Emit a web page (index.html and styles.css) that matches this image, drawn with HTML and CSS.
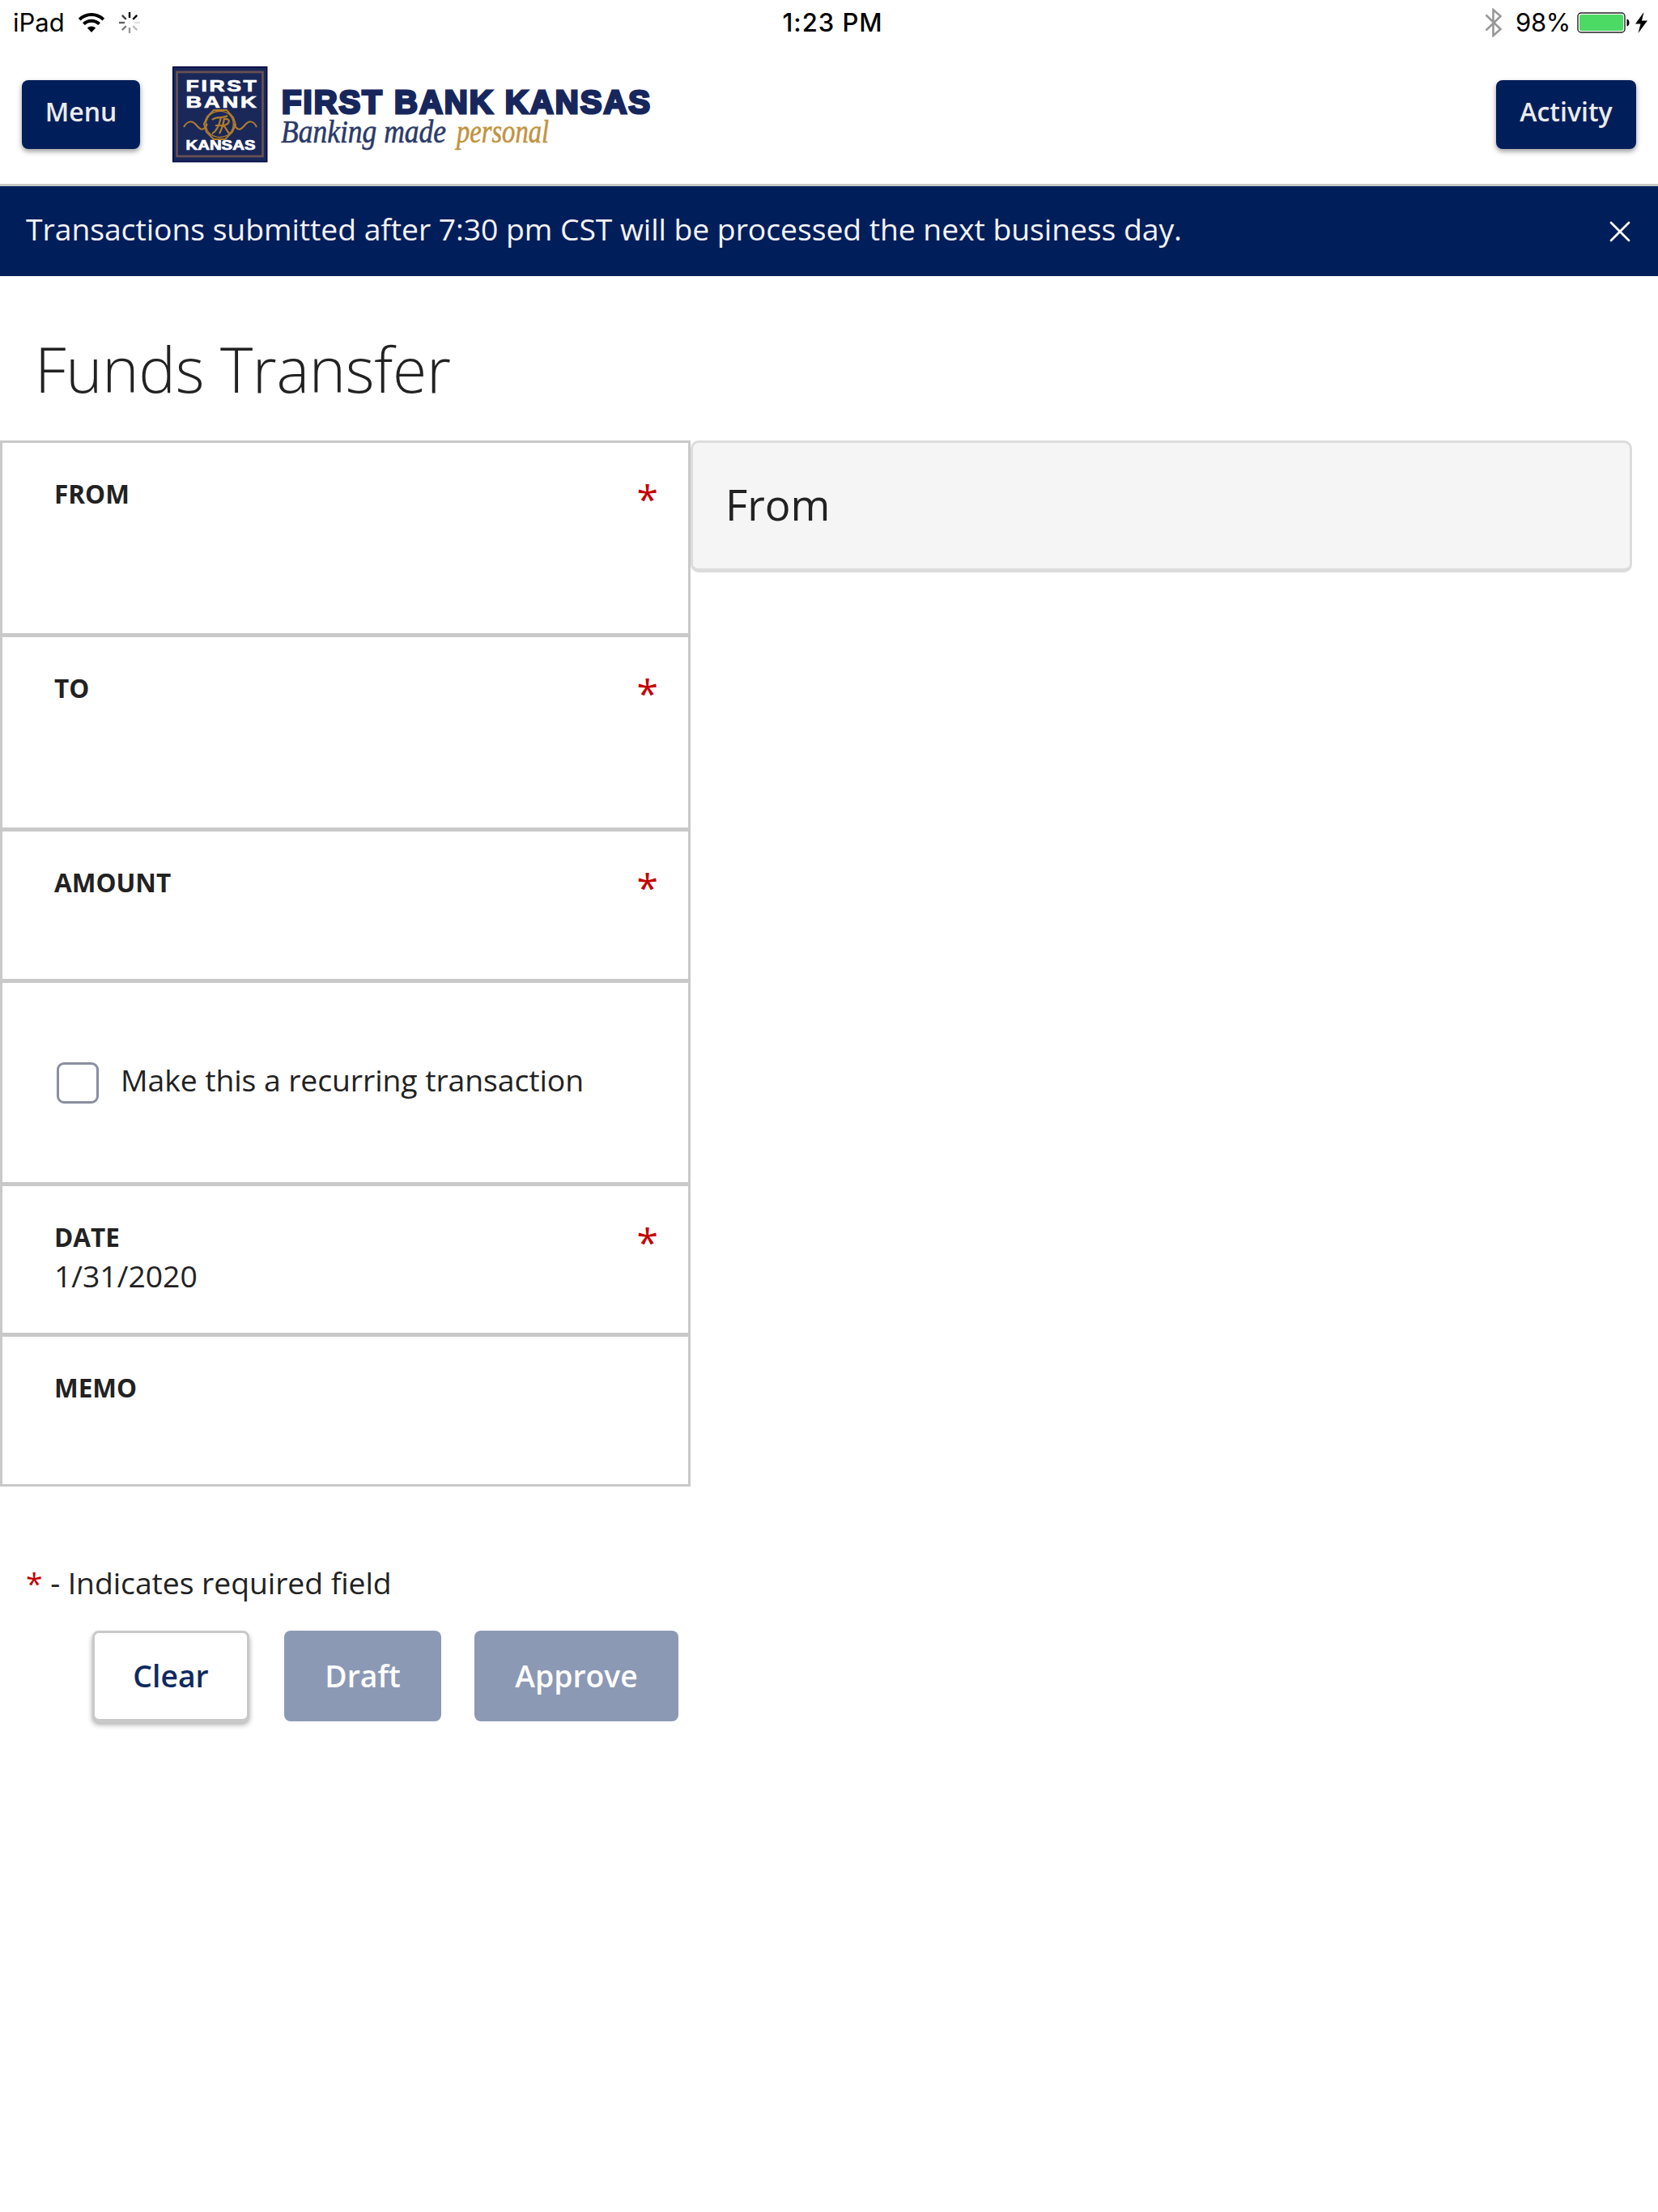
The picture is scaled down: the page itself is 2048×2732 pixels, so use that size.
FILE: index.html
```html
<!DOCTYPE html>
<html lang="en">
<head>
    <meta charset="UTF-8">
    <meta name="viewport" content="width=device-width, initial-scale=1.0">
    <title>Funds Transfer</title>
    <link rel="stylesheet" href="styles.css">
</head>
<body>
    <div class="status-bar">
        <div class="status-left">
            <span>iPad</span>
            <svg class="wifi" width="34" height="26" viewBox="0 0 34 26">
                <g fill="none" stroke="#000" stroke-width="4">
                    <path d="M2.2 9.2a21 21 0 0 1 29.6 0"/>
                    <path d="M7.4 14.6a13.6 13.6 0 0 1 19.2 0"/>
                </g>
                <path d="M17 25l-5.2-5.4a7.4 7.4 0 0 1 10.4 0z"/>
            </svg>
            <svg class="spinner" width="28" height="28" viewBox="-14 -14 28 28" stroke="#000" stroke-width="2.4">
                <path d="M0-6v-7"/>
                <path d="M4.2-4.2l5-5"/>
                <path d="M6 0h7" opacity=".12"/>
                <path d="M4.2 4.2l5 5" opacity=".25"/>
                <path d="M0 6v7" opacity=".38"/>
                <path d="M-4.2 4.2l-5 5" opacity=".5"/>
                <path d="M-6 0h-7" opacity=".62"/>
                <path d="M-4.2-4.2l-5-5" opacity=".75"/>
            </svg>
        </div>
        <div class="status-time">1:23 PM</div>
        <div class="status-right">
            <svg class="bluetooth" width="22" height="36" viewBox="0 0 22 36">
                <path d="M1.5 8.5l18 17.5-9 8V2l9 8-18 17.5" fill="none" stroke="#999" stroke-width="2.6"/>
            </svg>
            <span class="percent">98%</span>
            <svg class="battery" width="66" height="26" viewBox="0 0 66 26">
                <rect x="1" y="1" width="58" height="24" rx="4" fill="#fff" stroke="#222" stroke-width="1.4"/>
                <rect x="3" y="3" width="54" height="20" rx="2" fill="#4cd964"/>
                <path d="M61.5 8.5c4 0 4 9 0 9z"/>
            </svg>
            <svg class="bolt" width="15" height="26" viewBox="0 0 15 26">
                <path d="M10.5 0L0 14.5h6.5L3.5 26 15 10.5H8z"/>
            </svg>
        </div>
    </div>

    <div class="header">
        <button class="nav-button menu">Menu</button>
        <svg class="logo" width="600" height="120" viewBox="0 0 600 120">
            <rect x="0.7" y="0.7" width="116" height="117" fill="#1a2859" stroke="#020543" stroke-width="1.5"/>
            <rect x="5.5" y="7" width="106" height="104" fill="none" stroke="#6b5150" stroke-width="2.6"/>
            <g class="badge-text">
                <text class="spaced" x="16.5" y="30.5" font-size="20" textLength="90" lengthAdjust="spacingAndGlyphs">FIRST</text>
                <text class="spaced" x="16.5" y="50.5" font-size="20" textLength="90" lengthAdjust="spacingAndGlyphs">BANK</text>
                <text x="16.5" y="103" font-size="16" textLength="86" lengthAdjust="spacingAndGlyphs">KANSAS</text>
            </g>
            <g fill="none" stroke="#b17d2a" stroke-width="2">
                <path d="M14 75c5-9 11-8 16-2s9 7 13-2"/>
                <path d="M76 71c4 9 8 8 13 2s11-7 15 2"/>
                <path d="M51 54h16l8 9 3 9-4 9-9 9H51l-9-9-3-10 4-9z"/>
                <path d="M44 63c5-9 19-10 27-3 7 8 5 20-3 25-9 5-21 2-25-6-3-6-2-11 1-16z" stroke-width="1.4"/>
                <path d="M49 66c5-5 12-1 19-5M60 63c-2 9-5 17-11 20M53 73h9M64 64c-1 8-3 13-6 19M64 65c9-1 7 7-2 8 5 1 4 8 9 10" stroke-width="2.2"/>
            </g>
            <text class="bank-name" x="135" y="57.5" textLength="455" lengthAdjust="spacing">FIRST BANK KANSAS</text>
            <text class="tagline" x="134" y="94" textLength="204" lengthAdjust="spacingAndGlyphs">Banking made</text>
            <text class="tagline gold" x="351" y="94" textLength="114" lengthAdjust="spacingAndGlyphs">personal</text>
        </svg>
        <button class="nav-button activity">Activity</button>
    </div>

    <div class="banner">
        <span>Transactions submitted after 7:30 pm CST will be processed the next business day.</span>
        <svg width="26" height="26" viewBox="0 0 26 26">
            <path d="M2 2l22 22M24 2L2 24" stroke="#fff" stroke-width="2.8" stroke-linecap="round"/>
        </svg>
    </div>

    <h1>Funds Transfer</h1>

    <div class="content">
        <div class="form">
            <div class="field tall">
                <div class="label">FROM</div>
                <span class="required">*</span>
            </div>
            <div class="field tall">
                <div class="label">TO</div>
                <span class="required">*</span>
            </div>
            <div class="field">
                <div class="label">AMOUNT</div>
                <span class="required">*</span>
            </div>
            <label class="recurring">
                <input type="checkbox" class="checkbox">
                <span>Make this a recurring transaction</span>
            </label>
            <div class="field date">
                <div>
                    <div class="label">DATE</div>
                    <div class="value">1/31/2020</div>
                </div>
                <span class="required">*</span>
            </div>
            <div class="field">
                <div class="label">MEMO</div>
            </div>
        </div>
        <div class="panel">From</div>
    </div>

    <p class="note"><span class="star">*</span> - Indicates required field</p>

    <div class="actions">
        <button class="clear">Clear</button>
        <button class="draft" disabled>Draft</button>
        <button class="approve" disabled>Approve</button>
    </div>
</body>
</html>
```
FILE: styles.css
```css
* {
    box-sizing: border-box;
}
body {
    margin: 0;
    min-height: 100vh;
    background: #fff;
    color: #222;
    font-family: "Open Sans", "Noto Sans", sans-serif;
    font-size: 37.33px;
}
button {
    font-family: inherit;
    padding: 0;
    border: none;
}
svg {
    display: block;
    flex-shrink: 0;
}

/* status bar */
.status-bar {
    display: grid;
    grid-template-columns: 1fr auto 1fr;
    align-items: center;
    height: 54px;
    padding: 0 13px 0 16px;
    color: #000;
    font-family: Inter, "Liberation Sans", sans-serif;
    font-size: 31px;
    line-height: 55px;
}
.status-left,
.status-right {
    display: flex;
    align-items: center;
}
.status-right {
    justify-content: flex-end;
}
.status-time {
    font-weight: 500;
    letter-spacing: 1px;
    padding-left: 6px;
}
.wifi {
    margin-left: 16px;
}
.spinner {
    margin-left: 16px;
}
.percent {
    margin-left: 16px;
    letter-spacing: -0.3px;
}
.battery {
    margin-left: 8px;
}
.bolt {
    margin-left: 6px;
}

/* header */
.header {
    display: flex;
    align-items: flex-start;
    height: 176px;
    padding: 28px 27px 0;
    border-bottom: 3px solid #c8c8c8;
}
.nav-button {
    height: 85px;
    margin-top: 17px;
    padding-bottom: 8px;
    border-radius: 8px;
    background: #001e5a;
    color: #ebebeb;
    font-size: 32px;
    font-weight: 600;
    box-shadow: 0 3px 6px rgba(0, 0, 0, 0.4);
}
.menu {
    width: 146px;
}
.activity {
    width: 173px;
    margin-left: auto;
}
.logo {
    margin-left: 40px;
}
.badge-text {
    fill: #fff;
    stroke: #fff;
    stroke-width: 0.7;
    font-family: "Liberation Sans", Arial, sans-serif;
    font-weight: bold;
}
.badge-text .spaced {
    letter-spacing: 2px;
}
.bank-name {
    fill: #17275c;
    stroke: #17275c;
    stroke-width: 3;
    font-family: "Liberation Sans", Arial, sans-serif;
    font-size: 40px;
    font-weight: bold;
}
.tagline {
    fill: #2b3a69;
    stroke: #2b3a69;
    stroke-width: 0.6;
    font-family: "Liberation Serif", serif;
    font-size: 41px;
    font-style: italic;
}
.gold {
    fill: #c2933f;
    stroke: #c2933f;
}

/* notice */
.banner {
    display: flex;
    align-items: center;
    justify-content: space-between;
    height: 111px;
    padding: 0 34px 0 32px;
    background: #001e5a;
    color: #f4f4f8;
}
.banner span {
    padding-bottom: 6px;
    letter-spacing: -0.06px;
}

h1 {
    margin: 0;
    padding: 27px 0 0 43px;
    font-size: 76.8px;
    font-weight: 300;
    letter-spacing: -0.3px;
    line-height: 176px;
}

/* form */
.content {
    display: flex;
    align-items: flex-start;
}
.form {
    width: 853px;
    border: 3px solid #c9c9c9;
}
.field {
    display: flex;
    justify-content: space-between;
    align-items: flex-start;
    height: 187px;
    padding: 42px 37px 0 64px;
    border-bottom: 5px solid #c9c9c9;
}
.field.tall {
    height: 240px;
}
.field.date {
    height: 186px;
}
.field:last-child {
    height: 182px;
    border-bottom: none;
}
.label {
    font-size: 31.5px;
    font-weight: 700;
    line-height: 42px;
}
.value {
    line-height: 53px;
}
.required {
    margin-top: -3px;
    color: #c40000;
    font-size: 48px;
    line-height: 60px;
}
.recurring {
    display: flex;
    align-items: center;
    height: 251px;
    padding-left: 67px;
    border-bottom: 5px solid #c9c9c9;
}
.recurring span {
    padding: 0 0 7px 27px;
    letter-spacing: -0.08px;
}
.checkbox {
    appearance: none;
    width: 52px;
    height: 51px;
    margin: 0;
    border: 3px solid #8a8fa0;
    border-radius: 9px;
    background: #fff;
}
.panel {
    flex: 1;
    height: 163px;
    margin-right: 32px;
    padding-left: 40px;
    border: 3px solid #dcdcdc;
    border-bottom-width: 5px;
    border-radius: 10px;
    background: #f5f5f5;
    font-size: 52.8px;
    line-height: 152px;
}

.note {
    margin: 91px 0 31px 32px;
    line-height: 56px;
    letter-spacing: -0.06px;
}
.star {
    color: #c40000;
}

/* buttons */
.actions {
    display: flex;
    padding-left: 114px;
}
.actions button {
    height: 112px;
    padding-bottom: 1px;
    border-radius: 8px;
    background: #8c99b5;
    color: #fff;
    font-size: 37.33px;
    font-weight: 600;
}
.actions .clear {
    width: 194px;
    background: #fff;
    border: 3px solid #c9c9c9;
    color: #0f2a5f;
    box-shadow: 0 2px 0 #c9c9c9, 0 4px 6px rgba(0, 0, 0, 0.35);
}
.actions .draft {
    width: 194px;
    margin-left: 43px;
}
.actions .approve {
    width: 252px;
    margin-left: 41px;
}
```
